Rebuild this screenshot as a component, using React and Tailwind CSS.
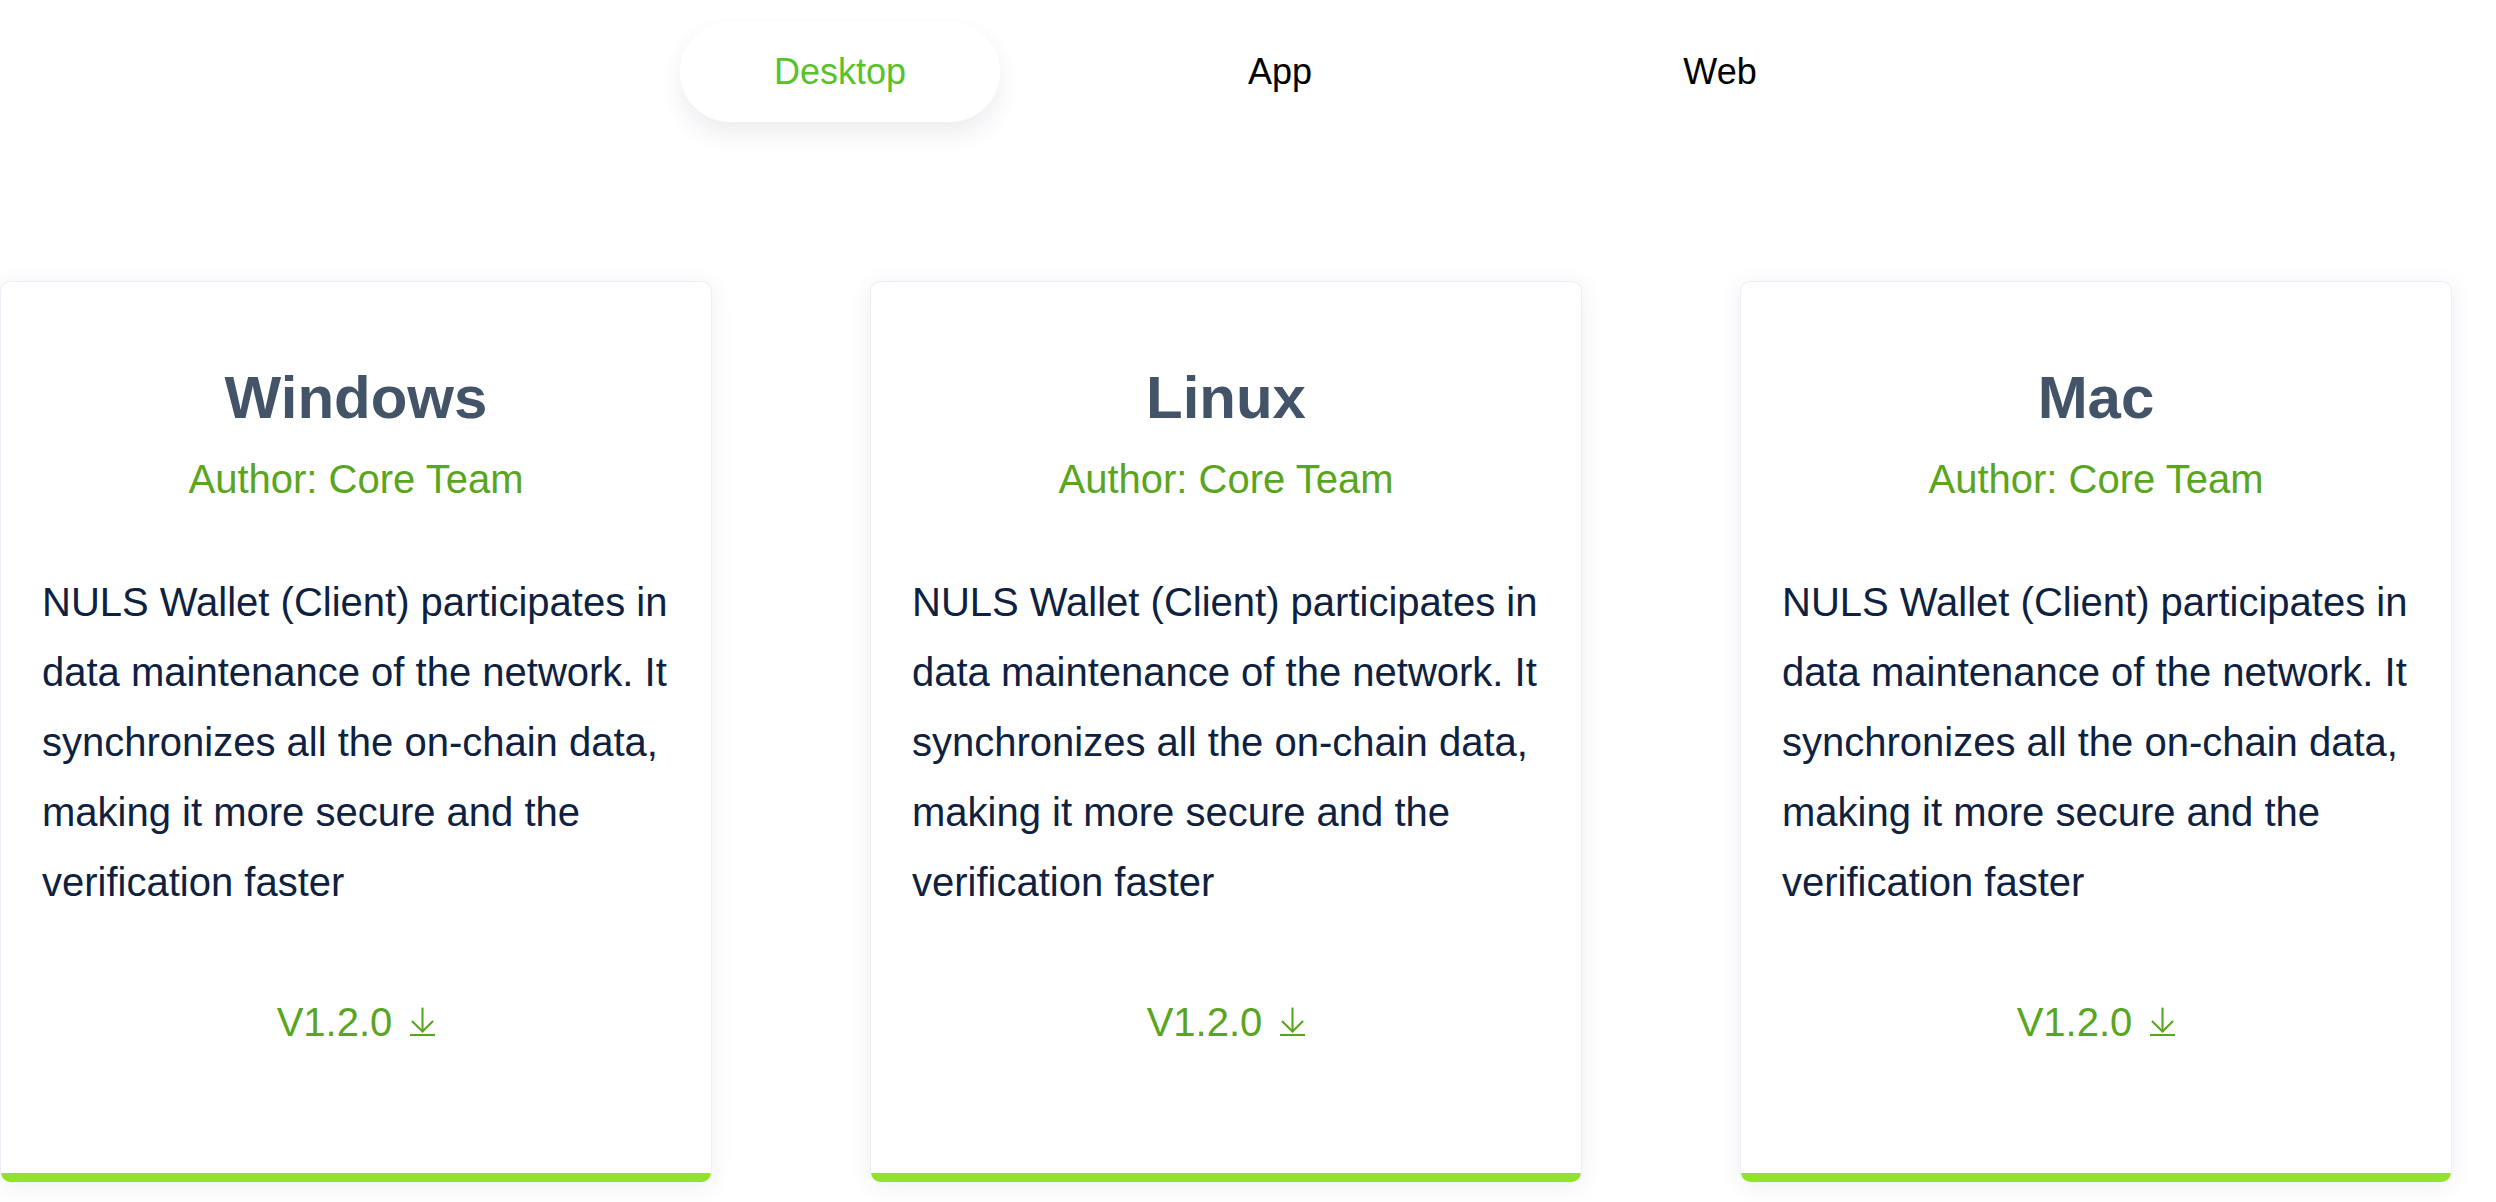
const cards = [
  { title: 'Windows' },
  { title: 'Linux' },
  { title: 'Mac' },
]

const tabs = ['Desktop', 'App', 'Web']

const DownloadIcon = () => (
  <svg width="25" height="30" viewBox="0 0 26 30" fill="none" stroke="#5aa51f" strokeWidth="2.2">
    <line x1="13" y1="0" x2="13" y2="25" />
    <polyline points="2,14 13,25 24,14" />
    <line x1="0" y1="28.5" x2="26" y2="28.5" />
  </svg>
)

const App = () => {
  return (
    <div className="w-[2496px] h-[1202px] bg-white overflow-hidden font-['Liberation_Sans',Arial,sans-serif]">
      {/* tabs */}
      <div className="flex pt-[22px] pl-[680px] gap-[120px]">
        {tabs.map((t, i) => (
          <div
            key={t}
            className={
              i === 0
                ? 'w-[320px] h-[100px] rounded-full flex items-center justify-center text-[36px] text-[#58c22b] bg-white shadow-[0_12px_24px_rgba(40,50,100,0.09)]'
                : 'w-[320px] h-[100px] flex items-center justify-center text-[36px] text-black'
            }
          >
            {t}
          </div>
        ))}
      </div>

      {/* cards */}
      <div className="flex gap-[158px] mt-[159px]">
        {cards.map((c) => (
          <div
            key={c.title}
            className="w-[712px] h-[901px] shrink-0 flex flex-col bg-white rounded-[10px] overflow-hidden border border-[#eceef6] border-b-0 shadow-[0_4px_24px_rgba(40,50,110,0.08)]"
          >
            <div className="flex-1 flex flex-col items-center pt-[80px]">
              <h2 className="text-[60px] leading-[72px] font-bold text-[#445468]">{c.title}</h2>
              <p className="mt-[21px] text-[40px] leading-[48px] text-[#5aa51e]">Author: Core Team</p>
              <p className="self-stretch mt-[64px] pl-[41px] pr-[20px] text-[40px] leading-[70px] text-[#0f2140]">
                NULS Wallet (Client) participates in data maintenance of the network. It synchronizes all the on-chain data, making it more secure and the verification faster
              </p>
              <a className="mt-[81px] flex items-center gap-[18px] text-[40px] leading-[48px] text-[#5aa51f] cursor-pointer">
                <span>V1.2.0</span>
                <DownloadIcon />
              </a>
            </div>
            <div className="h-[9px] bg-[#92e22c]" />
          </div>
        ))}
      </div>
    </div>
  )
}

export default App
